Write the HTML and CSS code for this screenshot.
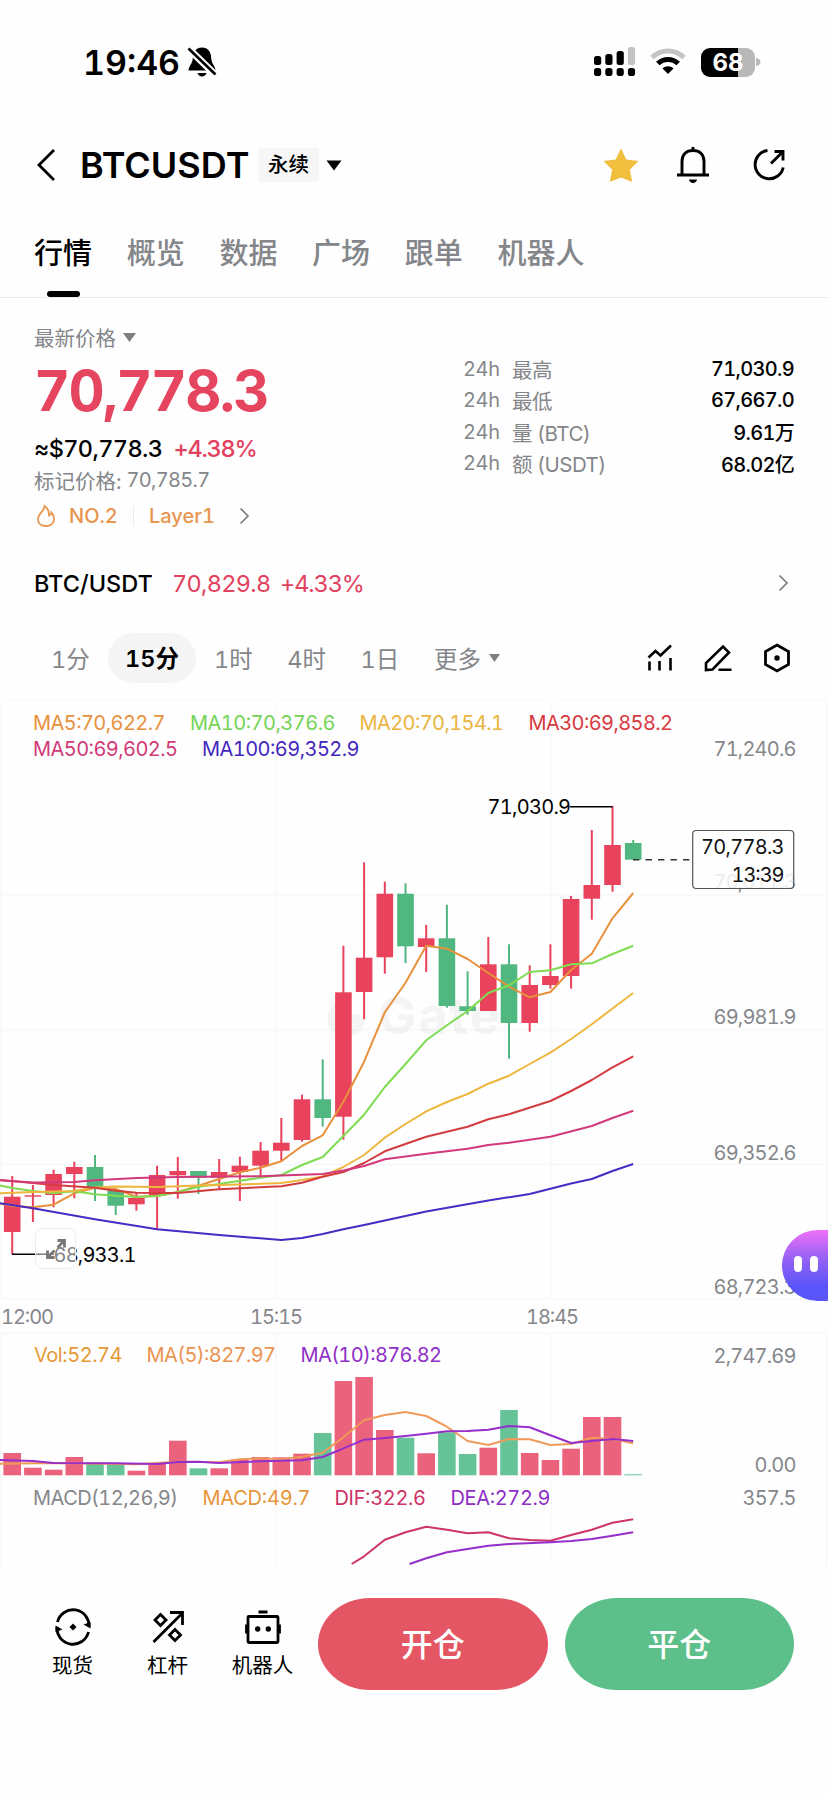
FILE: index.html
```html
<!DOCTYPE html>
<html lang="zh-CN">
<head>
    <meta charset="utf-8"/>
    <meta name="viewport" content="width=device-width, initial-scale=1.0"/>
    <title>BTCUSDT 永续</title>
    <link rel="stylesheet" href="styles.css">
</head>
<body>
<div class="phone">
    <div class="status-bar">
        <span class="clock">19:46</span>
        <svg class="mute" width="30" height="32" viewBox="0 0 30 32">
            <path d="M15 1.500C9 1.500 6 6 5.800 12C5.600 18 1.500 20 1.500 24.500H28.500C28.500 20 24.400 18 24.200 12C24 6 21 1.500 15 1.500Z"/>
            <path d="M10.500 27H19.500C18.500 31.500 11.500 31.500 10.500 27Z"/>
            <path d="M2 3L28.500 29" stroke="#fefefe" stroke-width="7"/>
            <path d="M1.500 2.500L28.500 28.500" stroke="#000" stroke-width="2.600"/>
        </svg>
        <div class="status-right">
            <svg width="42" height="30" viewBox="0 0 42 30">
                <rect x="0" y="9" width="7.200" height="9" rx="2.500"/>
                <rect x="11.300" y="7" width="7.200" height="11" rx="2.500"/>
                <rect x="22.600" y="4" width="7.200" height="14" rx="2.500"/>
                <rect x="33.900" y="0" width="7.200" height="18" rx="2.500" fill="#c4c4c4"/>
                <rect x="0" y="21" width="7.200" height="8" rx="2.800"/>
                <rect x="11.300" y="21" width="7.200" height="8" rx="2.800"/>
                <rect x="22.600" y="21" width="7.200" height="8" rx="2.800"/>
                <rect x="33.900" y="21" width="7.200" height="8" rx="2.800"/>
            </svg>
            <svg class="wifi" width="36" height="28" viewBox="0 0 36 28" fill="none">
                <path d="M2 9.500C11 .800 25 .800 34 9.500" stroke="#c4c4c4" stroke-width="5"/>
                <path d="M7.800 15.500C13.500 10 22.500 10 28.200 15.500" stroke="#000" stroke-width="5"/>
                <path d="M12.500 20.500C15.500 17.500 20.500 17.500 23.500 20.500L18 26Z" fill="#000"/>
            </svg>
            <div class="battery"><span>68</span></div>
            <svg class="battery-cap" width="5" height="10" viewBox="0 0 5 10"><path d="M0 1C6 2 6 8 0 9Z" fill="#b8b8b8"/></svg>
        </div>
    </div>

    <div class="header">
        <svg class="back" width="20" height="34" viewBox="0 0 20 34"><path d="M18 2L3 17L18 32" fill="none" stroke="#000" stroke-width="2.800"/></svg>
        <h1>BTCUSDT</h1>
        <span class="tag">永续</span>
        <svg class="caret" width="16" height="11" viewBox="0 0 16 11"><path d="M.500 .500H15.500L8 10.500Z"/></svg>
        <div class="header-icons">
            <svg width="36" height="36" viewBox="0 0 36 36"><path d="M18 1.200L23.300 12.500L35.500 14L26.800 22.800L29.300 35L18 30.500L6.700 35L9.200 22.800L.500 14L12.700 12.500Z" fill="#f2be3d"/></svg>
            <svg width="34" height="38" viewBox="0 0 34 38" fill="none" stroke="#000" stroke-width="2.900">
                <path d="M17 1V5M6 28.500V15.500C6 8.500 10.500 4.500 17 4.500S28 8.500 28 15.500V28.500M1 29H33"/>
                <path d="M13 33.500H21C20.500 38 13.500 38 13 33.500Z" fill="#000" stroke="none"/>
            </svg>
            <svg width="34" height="34" viewBox="0 0 34 34" fill="none" stroke="#000" stroke-width="2.900">
                <path d="M15.500 2.500A14.200 14.200 0 1 0 31.200 19.500M19 15.500L30.500 4M22.500 3.500H31V12.500"/>
            </svg>
        </div>
    </div>

    <nav class="tabs">
        <span class="tab active">行情</span>
        <span class="tab">概览</span>
        <span class="tab">数据</span>
        <span class="tab">广场</span>
        <span class="tab">跟单</span>
        <span class="tab">机器人</span>
    </nav>

    <section class="summary">
        <div class="price">
            <div class="price-label">最新价格 <svg width="13" height="9" viewBox="0 0 13 9"><path d="M0 0H13L6.500 9Z" fill="#7c7e82"/></svg></div>
            <div class="price-big">70,778.3</div>
            <div class="price-usd"><span>≈$70,778.3</span><span class="up">+4.38%</span></div>
            <div class="price-mark"><span>标记价格:</span><span class="mark-value">70,785.7</span></div>
            <div class="rank">
                <svg width="20" height="24" viewBox="0 0 20 24" fill="none" stroke="#e8954f" stroke-width="1.800"><path d="M8.500 2C9 7 2 9 2 15.500C2 19.500 5.500 22 10 22S18 19.500 18 15C18 12 17 10 15.500 8.500C15.300 10 14.500 11 13 11.500C13.300 7.500 11.500 4 8.500 2Z"/></svg>
                <span class="rank-no">NO.2</span>
                <i></i>
                <span class="rank-layer">Layer1</span>
                <svg width="11" height="18" viewBox="0 0 11 18"><path d="M1.500 1.500L9 9L1.500 16.500" fill="none" stroke="#7c7e82" stroke-width="1.700"/></svg>
            </div>
        </div>
        <div class="stats">
            <div><b>24h</b><span>最高</span><em>71,030.9</em></div>
            <div><b>24h</b><span>最低</span><em>67,667.0</em></div>
            <div><b>24h</b><span>量 (BTC)</span><em>9.61万</em></div>
            <div><b>24h</b><span>额 (USDT)</span><em>68.02亿</em></div>
        </div>
    </section>

    <div class="pair">
        <span class="pair-name">BTC/USDT</span>
        <span class="pair-price">70,829.8</span>
        <span class="pair-change">+4.33%</span>
        <svg width="11" height="18" viewBox="0 0 11 18"><path d="M1.500 1.500L9 9L1.500 16.500" fill="none" stroke="#7c7e82" stroke-width="1.700"/></svg>
    </div>

    <div class="periods">
        <span>1分</span>
        <span class="active">15分</span>
        <span>1时</span>
        <span>4时</span>
        <span>1日</span>
        <span class="more">更多 <svg width="11" height="8" viewBox="0 0 11 8"><path d="M0 0H11L5.500 8Z" fill="#7c7e82"/></svg></span>
        <div class="tools">
            <svg width="26" height="28" viewBox="0 0 26 28" fill="none" stroke="#000" stroke-width="2.600"><path d="M1.500 13.500L8.500 7L13.500 11.500L24 1.500M2.500 17.500V26.500M12.500 17V26.500M23.500 14V26.500"/></svg>
            <svg width="28" height="28" viewBox="0 0 28 28" fill="none" stroke="#000" stroke-width="2.600"><path d="M2 26V19L19 2.500L25 8.500L8.500 25.500ZM14.500 25.700H27.500"/></svg>
            <svg width="28" height="30" viewBox="0 0 28 30" fill="none" stroke="#000" stroke-width="2.800"><path d="M14 2L25.500 8.500V21.500L14 28L2.500 21.500V8.500Z"/><circle cx="14" cy="15" r="2.700" fill="#000" stroke="none"/></svg>
        </div>
    </div>

    <div class="chart-wrap">
        <svg id="chart" class="chart" width="828" height="866" viewBox="0 700 828 866"></svg>
        <div class="expand">
            <svg width="20" height="20" viewBox="0 0 20 20" fill="none" stroke="#777" stroke-width="2.800"><path d="M11.500 1.500H18.500V8.500M18 2L11.500 8.500M1.500 11.500V18.500H8.500M2 18L8.500 11.500"/></svg>
        </div>
        <div class="bot"><i></i><i></i></div>
    </div>

    <footer class="actions">
        <div class="action">
            <svg width="38" height="38" viewBox="0 0 38 38" fill="none" stroke="#000" stroke-width="2.800">
                <path d="M3.500 14A16 16 0 0 1 35 19M34.500 24A16 16 0 0 1 3 19"/>
                <path d="M36.500 20.500L29.500 16.500L36.500 14ZM1.500 17.500L8.500 21.500L1.500 24ZM19 15.500L22.500 19L19 22.500L15.500 19Z" fill="#000" stroke="none"/>
            </svg>
            <span>现货</span>
        </div>
        <div class="action">
            <svg width="38" height="38" viewBox="0 0 38 38" fill="none" stroke="#000" stroke-width="2.800">
                <path d="M4.500 34L33.500 5M21 4.500H33.500V17M11.500 6.500L17 12L11.500 17.500L6 12ZM26 21.500L31.500 27L26 32.500L20.500 27Z"/>
            </svg>
            <span>杠杆</span>
        </div>
        <div class="action">
            <svg width="38" height="38" viewBox="0 0 38 38" fill="none" stroke="#000" stroke-width="2.800">
                <rect x="4" y="8.500" width="30" height="26" rx="1"/>
                <path d="M14.500 4H23.500M2.500 16.500V25.500M35.500 16.500V25.500"/>
                <circle cx="13.700" cy="21" r="2.700" fill="#000" stroke="none"/>
                <circle cx="24.300" cy="21" r="2.700" fill="#000" stroke="none"/>
            </svg>
            <span>机器人</span>
        </div>
        <button class="btn open">开仓</button>
        <button class="btn close">平仓</button>
    </footer>
</div>

<script>
    const RED = '#e8425c';
    const GREEN = '#50b780';
    const STEP = 20.7;
    const X0 = 12.2;

    // [最高, 实体上沿, 实体下沿, 最低, 颜色]
    const candles = [
        [1176, 1196.7, 1232, 1254, RED],
        [1185, 1195.3, 1196.7, 1222, RED],
        [1169.7, 1174, 1195, 1207.3, RED],
        [1161.7, 1167, 1174, 1198.3, RED],
        [1155, 1167, 1187.7, 1201, GREEN],
        [1188, 1190.3, 1205.7, 1215, GREEN],
        [1193, 1198, 1204.3, 1210.7, RED],
        [1165.7, 1175, 1196, 1229.3, RED],
        [1157, 1171, 1175.3, 1198.7, RED],
        [1171, 1171, 1177.7, 1194, GREEN],
        [1159, 1172, 1177.7, 1188.7, RED],
        [1156.7, 1165.7, 1172, 1201, RED],
        [1142, 1150.7, 1165.7, 1176.7, RED],
        [1118, 1142.7, 1150.7, 1162, RED],
        [1094.7, 1099.3, 1140, 1141.7, RED],
        [1059.3, 1099.3, 1118, 1126.7, GREEN],
        [945.7, 992.3, 1116.7, 1139.7, RED],
        [862.3, 957.7, 992, 1019.3, RED],
        [881.7, 893.7, 957.3, 973.7, RED],
        [883.3, 893.7, 946.3, 963, GREEN],
        [925, 938.3, 947, 972, RED],
        [904.7, 938.3, 1006, 1007.7, GREEN],
        [971.3, 1006.3, 1011, 1014.7, GREEN],
        [937, 964.3, 1011, 1011, RED],
        [944.3, 964.3, 1023, 1058.7, GREEN],
        [965.3, 985, 1023, 1031.7, RED],
        [944.3, 976, 985, 988.7, RED],
        [896, 899, 976, 988.7, RED],
        [830, 885, 898.7, 919.7, RED],
        [806, 845, 885, 891.7, RED],
        [840, 843, 859.7, 859.7, GREEN]
    ];

    // 成交量柱的上沿
    const volumes = [1453, 1467.7, 1469.7, 1457, 1463.7, 1464.3, 1470.7, 1464, 1440.7, 1468.3, 1468.3,
        1459.3, 1457, 1457.3, 1453.7, 1433, 1381, 1377, 1430, 1437.7, 1453.3, 1432.3, 1454, 1447.7,
        1410, 1453, 1460, 1448.7, 1417, 1417, 1474.3];

    // 均线: [K线序号, y]
    const lines = [
        {color: '#e8913d', pts: [[-.6, 1203.5], [0, 1206], [1, 1207.3], [2, 1204.7], [3, 1193.3], [4, 1187.7], [5, 1189], [6, 1196.7], [7, 1196], [8, 1192], [9, 1185.7], [10, 1179], [11, 1172.3], [12, 1167.7], [13, 1161.3], [14, 1146], [15, 1135.3], [16, 1101.7], [17, 1061.7], [18, 1012.3], [19, 982.7], [20, 945.7], [21, 948.7], [22, 959], [23, 973], [24, 986.7], [25, 997.3], [26, 992], [27, 970], [28, 953.7], [29, 918.3], [30, 893]]},
        {color: '#7fdc52', pts: [[-.6, 1185.5], [0, 1188], [1, 1191], [2, 1193.3], [3, 1191.3], [4, 1194.3], [5, 1195.7], [6, 1197], [7, 1196], [8, 1192], [9, 1186.7], [10, 1184], [11, 1180.7], [12, 1177.7], [13, 1175], [14, 1165], [15, 1157], [16, 1136], [17, 1114.7], [18, 1087], [19, 1064], [20, 1040.3], [21, 1025.3], [22, 1011], [23, 993], [24, 985.3], [25, 972], [26, 970.3], [27, 964.3], [28, 963.3], [29, 954], [30, 945.7]]},
        {color: '#eeb63f', pts: [[-.6, 1193.3], [1, 1192], [3, 1191], [4, 1187.5], [5, 1186.5], [7, 1187], [9, 1185.5], [11, 1184.5], [13, 1183], [14, 1180], [15, 1176.5], [16, 1167], [17, 1155], [18, 1137.7], [19, 1124], [20, 1111.3], [21, 1102], [22, 1094], [23, 1083.7], [24, 1075.7], [25, 1064], [26, 1052.7], [27, 1039], [28, 1024.3], [29, 1008.5], [30, 993]]},
        {color: '#d33c3f', pts: [[-.6, 1180], [1, 1183], [2, 1185], [4, 1187.7], [5, 1190.7], [6, 1192.7], [8, 1193], [10, 1189.3], [13, 1186.3], [14, 1182.7], [15, 1176.7], [16, 1172], [17, 1163], [18, 1151.3], [20, 1136.7], [22, 1126.7], [23, 1119.3], [24, 1114.3], [26, 1101], [27, 1091], [28, 1080], [29, 1067.3], [30, 1056.3]]},
        {color: '#d1397b', pts: [[-.6, 1180.3], [1, 1182.5], [3, 1182], [4, 1180.3], [6, 1178], [8, 1177], [12, 1176.3], [15, 1174], [16, 1170.5], [17, 1166], [18, 1159.3], [20, 1153.7], [22, 1148.7], [23, 1145], [24, 1142.7], [26, 1136.7], [28, 1126], [29, 1118], [30, 1110.7]]},
        {color: '#4a2ac4', pts: [[-.6, 1203.3], [1, 1208.3], [4, 1219.3], [7, 1229.3], [10, 1235], [13, 1240], [14, 1238], [15, 1234], [16, 1229.3], [17, 1225], [20, 1211.5], [23, 1200.5], [25, 1194], [27, 1183.5], [28, 1179], [29, 1171], [30, 1164]]},
        {color: '#ef9a5a', pts: [[-.6, 1463.7], [2, 1463], [6, 1464.3], [8, 1461.7], [10, 1462.3], [11, 1459.3], [12, 1458.3], [13, 1459.3], [14, 1456.7], [15, 1452.7], [16, 1437.3], [17, 1420.3], [18, 1415], [19, 1412], [20, 1416], [21, 1426.7], [22, 1441], [23, 1445], [24, 1439], [25, 1439.3], [26, 1445], [27, 1444], [28, 1437.7], [29, 1439], [30, 1443.3]]},
        {color: '#962ecb', pts: [[-.6, 1460], [1, 1461], [2, 1463], [5, 1463.3], [7, 1464], [8, 1462], [9, 1461.7], [10, 1463], [12, 1461.3], [14, 1460.3], [15, 1457], [16, 1448.3], [17, 1439.7], [18, 1438], [19, 1436], [20, 1433.7], [21, 1431.3], [22, 1431], [23, 1429.7], [24, 1426], [25, 1427.3], [26, 1435.3], [27, 1443], [28, 1441], [29, 1439], [30, 1441]]},
        {color: '#cf3468', pts: [[16.4, 1564], [17, 1556.3], [18, 1539.7], [19, 1532.3], [20, 1526.7], [21, 1529.7], [22, 1533.3], [23, 1532.3], [24, 1538.3], [25, 1540], [26, 1540.7], [27, 1535], [28, 1529.7], [29, 1522.7], [30, 1519.3]]},
        {color: '#962ecb', pts: [[19.2, 1564], [20, 1558.3], [21, 1552.3], [22, 1549], [23, 1545.7], [24, 1544], [26, 1542.3], [27, 1541], [28, 1539], [29, 1535.7], [30, 1532.3]]}
    ];

    // [文字, x, 基线, 宽度, 颜色]
    const GRAY = '#85878b';
    const labels = [
        ['MA5:70,622.7', 33, 730.3, 132.5, '#e8913d'],
        ['MA10:70,376.6', 190, 730.3, 145.5, '#74d455'],
        ['MA20:70,154.1', 359.5, 730.3, 144.5, '#e9b53c'],
        ['MA30:69,858.2', 528.5, 730.3, 144.5, '#d8393f'],
        ['MA50:69,602.5', 33, 755.5, 145, '#d03a77'],
        ['MA100:69,352.9', 202, 755.5, 157.5, '#4327bd'],
        ['71,240.6', 713.5, 756, 83, GRAY],
        ['69,981.9', 713.5, 1024.3, 83, GRAY],
        ['69,352.6', 713.5, 1159.5, 83, GRAY],
        ['68,723.3', 713.5, 1293.7, 83, GRAY],
        ['12:00', 1, 1324, 53, GRAY],
        ['15:15', 250, 1324, 53, GRAY],
        ['18:45', 526, 1324, 53, GRAY],
        ['Vol:52.74', 34, 1362, 88.5, '#e59a35'],
        ['MA(5):827.97', 146.5, 1362, 129.5, '#ea9452'],
        ['MA(10):876.82', 300.5, 1362, 141.5, '#8f2fc6'],
        ['2,747.69', 713.5, 1362.5, 83, GRAY],
        ['0.00', 754.5, 1471.5, 42, GRAY],
        ['MACD(12,26,9)', 33, 1505, 145, GRAY],
        ['MACD:49.7', 202.5, 1505, 108, '#e8953a'],
        ['DIF:322.6', 334.5, 1505, 91.5, '#cf3468'],
        ['DEA:272.9', 450.5, 1505, 100, '#8f2fc6'],
        ['357.5', 742.5, 1505, 54, GRAY],
        ['71,030.9', 487.5, 814, 83.5, '#000'],
        ['68,933.1', 53.5, 1261.7, 83, '#000']
    ];

    const x = i => X0 + STEP * i;
    const rect = (x, y, w, h, fill) => `<rect x="${x}" y="${y}" width="${w}" height="${h}" fill="${fill}"/>`;
    const text = ([t, x, y, w, fill]) => `<text x="${x}" y="${y}" textLength="${w}" fill="${fill}">${t}</text>`;
    let svg = '';

    // 网格
    svg += rect(0, 700, 828, 1, '#f9f9fa');
    [894.5, 1029.5, 1164, 1298.5, 1332.5].forEach(y => {
        svg += rect(0, y, 828, 1, '#f4f5f6');
    });
    [0, 275, 551, 826].forEach(gx => {
        svg += rect(gx, 700, 1.5, 598, '#f8f8f9') + rect(gx, 1333, 1.5, 232, '#f8f8f9');
    });

    // 水印
    svg += '<g class="watermark"><circle cx="346" cy="1019" r="14" fill="none" stroke="#000" stroke-width="9" stroke-dasharray="70 18"/><rect x="345" y="1014" width="14" height="10"/><text x="378" y="1034" textLength="122">Gate</text></g>';

    candles.forEach(([high, top, bottom, low, color], i) => {
        svg += rect(x(i) - 1, high, 2, low - high, color);
        svg += rect(x(i) - 8.3, top, 16.6, bottom - top, color);
        svg += rect(x(i) - 8.8, volumes[i], 17.6, 1475.3 - volumes[i], color === RED ? '#ea627b' : '#65c397');
    });

    lines.forEach(l => {
        svg += `<polyline points="${l.pts.map(p => x(p[0]).toFixed(1) + ',' + p[1]).join(' ')}" stroke="${l.color}"/>`;
    });

    labels.forEach(l => svg += text(l));

    // 最高/最低价引线
    svg += rect(570, 806, 42.500, 1.500, '#000') + rect(12, 1253.5, 42, 1.500, '#000');

    // 当前价
    svg += '<path d="M633 859.800H692" stroke="#333" stroke-width="1.500" stroke-dasharray="6.400 6.100"/>';
    svg += text(['70,611.3', 713.5, 889, 83, GRAY]);
    svg += '<rect x="692.700" y="830.500" width="101" height="58" rx="3.500" fill="#fefefe" fill-opacity="0.85" stroke="#555" stroke-width="1.200"/>';
    svg += text(['70,778.3', 701, 854, 83.5, '#111']) + text(['13:39', 731.5, 881.5, 53, '#111']);

    document.getElementById('chart').innerHTML = svg;
</script>
</body>
</html>
```
FILE: styles.css
```css
* {
    box-sizing: border-box;
}

body {
    margin: 0;
    font-family: Inter, "Noto Sans CJK SC", sans-serif;
    font-feature-settings: "tnum";
    background-color: #fefefe;
    color: #000;
}

svg {
    flex: none;
}

.phone {
    width: 828px;
    height: 1796px;
    overflow: hidden;
}

/* 状态栏 */
.status-bar {
    display: flex;
    align-items: center;
    height: 124px;
    padding: 0 67px 0 83px;
}

.clock {
    font-size: 34px;
    font-weight: 600;
    width: 104px;
}

.status-right {
    display: flex;
    align-items: center;
    margin-left: auto;
}

.wifi {
    margin: 0 15px 0 14px;
}

.battery {
    width: 54px;
    height: 29px;
    border-radius: 9px;
    background: linear-gradient(90deg, #000 68%, #b8b8b8 68%);
    color: #fff;
    font-size: 24px;
    font-weight: 700;
    line-height: 29px;
    text-align: center;
}

.battery-cap {
    margin-left: 1px;
}

/* 标题 */
.header {
    display: flex;
    align-items: center;
    height: 82px;
    padding: 0 42px 0 36px;
}

.header h1 {
    margin: 0 10px 0 24px;
    width: 168px;
    font-size: 36px;
    font-weight: 600;
    white-space: nowrap;
}

.tag {
    width: 61px;
    height: 34px;
    border-radius: 3px;
    background-color: #f6f6f6;
    font-size: 20.5px;
    font-weight: 500;
    line-height: 33px;
    text-align: center;
}

.caret {
    margin-left: 7px;
}

.header-icons {
    display: flex;
    align-items: center;
    margin-left: auto;
}

.header-icons svg + svg {
    margin-left: 37px;
}

.header-icons svg:last-child {
    margin-left: 42px;
}

.tabs {
    display: flex;
    gap: 34.7px;
    height: 92px;
    padding-left: 34px;
    border-bottom: 1px solid #ebebeb;
    color: #84868a;
    font-size: 29px;
    font-weight: 500;
    line-height: 96px;
}

.tab.active {
    position: relative;
    color: #000;
}

.tab.active::after {
    content: "";
    position: absolute;
    left: 13px;
    bottom: 0;
    width: 33px;
    height: 6px;
    border-radius: 3px;
    background-color: #000;
}

/* 价格 */
.summary {
    display: flex;
    justify-content: space-between;
    height: 238px;
    padding: 26px 34px 0 34px;
}

.price > div {
    display: flex;
    align-items: center;
    white-space: nowrap;
}

.price .price-label {
    gap: 7px;
    height: 26px;
    color: #84868a;
    font-size: 20.5px;
}

.price .price-big {
    height: 82px;
    color: #e5455f;
    font-size: 56px;
    font-weight: 700;
    letter-spacing: -1.7px;
}

.price .price-usd {
    gap: 11px;
    height: 33px;
    font-size: 23.5px;
    font-weight: 500;
    letter-spacing: -0.6px;
}

.up {
    color: #e2415f;
    letter-spacing: -1.2px;
}

.price .price-mark {
    gap: 5px;
    height: 30px;
    color: #84868a;
    font-size: 20.5px;
}

.mark-value {
    font-size: 20px;
    letter-spacing: -0.7px;
}

.price .rank {
    height: 41px;
    padding-left: 2px;
    color: #e8954f;
    font-size: 20px;
    font-weight: 500;
}

.rank-no {
    width: 64px;
    margin-left: 13px;
}

.rank i {
    width: 1px;
    height: 20px;
    margin-right: 15px;
    background-color: #ebebeb;
}

.rank-layer {
    width: 90px;
}

.stats {
    width: 331px;
    padding-top: 29px;
}

.stats div {
    display: flex;
    align-items: center;
    height: 31.5px;
    color: #84868a;
    font-size: 20px;
}

.stats b {
    width: 49px;
    font-weight: 400;
    letter-spacing: -0.4px;
}

.stats span {
    font-size: 20.5px;
    letter-spacing: -0.5px;
}

.stats em {
    margin-left: auto;
    color: #000;
    font-style: normal;
    font-weight: 500;
    letter-spacing: -0.7px;
}

.pair {
    display: flex;
    align-items: center;
    height: 87px;
    padding: 7px 39px 0 34px;
    color: #e2415f;
    font-size: 23.5px;
}

.pair-name {
    width: 138px;
    color: #000;
    font-weight: 500;
}

.pair-price {
    width: 108px;
    letter-spacing: -0.7px;
}

.pair-change {
    letter-spacing: -1.1px;
}

.pair svg {
    margin-left: auto;
}

/* 周期 */
.periods {
    display: flex;
    align-items: center;
    height: 70px;
    margin-bottom: 7px;
    padding: 0 37px 0 51px;
    color: #84868a;
    font-size: 23.5px;
    white-space: nowrap;
}

.periods > span {
    width: 73.3px;
}

.periods > .active {
    width: 88px;
    height: 50px;
    margin: 0 18px 0 -16.3px;
    border-radius: 25px;
    background-color: #f5f5f5;
    color: #000;
    font-weight: 600;
    line-height: 51px;
    text-align: center;
}

.periods > .more {
    display: flex;
    align-items: center;
    gap: 8px;
}

.tools {
    display: flex;
    align-items: center;
    gap: 31px;
    margin-left: auto;
}

/* 图表 */
.chart-wrap {
    position: relative;
    height: 866px;
}

.chart {
    display: block;
}

.chart text {
    font-size: 20px;
}

.chart polyline {
    fill: none;
    stroke-width: 2;
    stroke-linejoin: round;
}

.chart .watermark {
    opacity: 0.035;
}

.chart .watermark text {
    font-size: 51px;
    font-weight: 700;
}

.expand {
    position: absolute;
    left: 35px;
    top: 528px;
    display: flex;
    align-items: center;
    justify-content: center;
    width: 41px;
    height: 41px;
    border: 1.5px solid #ededed;
    border-radius: 8px;
    background-color: rgba(255, 255, 255, 0.5);
}

.bot {
    position: absolute;
    right: 0;
    top: 530px;
    display: flex;
    gap: 8px;
    width: 46px;
    height: 71px;
    padding: 26px 0 0 12px;
    border-radius: 36px 0 0 36px;
    background: linear-gradient(#f070f8 0%, #9a62f4 38%, #5a55f8 80%);
}

.bot i {
    width: 8px;
    height: 16px;
    border-radius: 4px;
    background-color: #fff;
}

/* 底部 */
.actions {
    display: flex;
    align-items: flex-start;
    padding: 32px 34px 0 25px;
}

.action {
    display: flex;
    flex-direction: column;
    align-items: center;
    gap: 5px;
    width: 95px;
    padding-top: 10px;
    font-size: 20.5px;
    line-height: 30px;
}

.btn {
    flex: 1;
    height: 92px;
    margin: 0 0 0 17px;
    padding: 0 0 4px;
    border: 0;
    border-radius: 52px / 46px;
    color: #fff;
    font-family: inherit;
    font-size: 32px;
    font-weight: 500;
}

.open {
    margin-left: 8px;
    background-color: #e45663;
}

.close {
    background-color: #5dbf8a;
}
```
